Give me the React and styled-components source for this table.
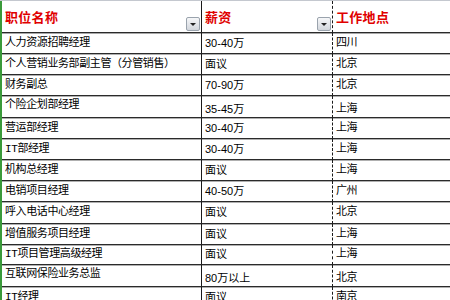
import React from 'react';
import styled, { createGlobalStyle } from 'styled-components';

const GlobalStyle = createGlobalStyle`
  html, body {
    margin: 0;
    padding: 0;
    background: #fff;
    overflow: hidden;
  }
  body {
    font-family: "Liberation Sans", "Noto Sans CJK SC", sans-serif;
  }
`;

const rows = [
  { name: '人力资源招聘经理', pay: '30-40万', city: '四川' },
  { name: '个人营销业务部副主管（分管销售）', pay: '面议', city: '北京' },
  { name: '财务副总', pay: '70-90万', city: '北京' },
  { name: '个险企划部经理', pay: '35-45万', city: '上海', tall: true },
  { name: '营运部经理', pay: '30-40万', city: '上海' },
  { name: 'IT部经理', pay: '30-40万', city: '上海' },
  { name: '机构总经理', pay: '面议', city: '上海' },
  { name: '电销项目经理', pay: '40-50万', city: '广州' },
  { name: '呼入电话中心经理', pay: '面议', city: '北京', h: 22 },
  { name: '增值服务项目经理', pay: '面议', city: '上海' },
  { name: 'IT项目管理高级经理', pay: '面议', city: '上海', h: 20 },
  { name: '互联网保险业务总监', pay: '80万以上', city: '北京', tall: true },
  { name: 'IT经理', pay: '面议', city: '南京', h: 22 },
];

const rule = col =>
  col === 0 ? '1px solid #1a1a1a' : col === 1 ? '1px dashed #1a1a1a' : 'none';

const Page = styled.div`
  width: 450px;
  height: 300px;
  overflow: hidden;
  display: flex;
  flex-direction: column;
`;

const TopStrip = styled.div`
  height: 2px;
  background: #e4e6ea;
  border-bottom: 1px solid #c4c8cf;
`;

const Sheet = styled.div`
  display: grid;
  grid-template-columns: 200px 131px 1fr;
  border-left: 2px solid #3a9a3a;
`;

const HeadCell = styled.div`
  height: 31px;
  display: flex;
  align-items: center;
  padding-left: 3px;
  padding-right: 1px;
  border-bottom: 1px solid #2a2a2a;
  box-shadow: 0 1px 0 #a8a8a8;
  border-right: ${p => rule(p.$col)};
  color: #e00000;
  font-family: "Noto Sans CJK SC", sans-serif;
  font-weight: 700;
  font-size: 13px;
  letter-spacing: 0.3px;
`;

const HeadText = styled.span`
  flex: 1;
`;

const Filter = styled.span`
  align-self: flex-end;
  margin-bottom: 1px;
  width: 14px;
  height: 14px;
  box-sizing: border-box;
  border: 1px solid #9aa3ad;
  border-radius: 2px;
  background: linear-gradient(#f6f7f9, #d2d6dc);
  display: flex;
  align-items: center;
  justify-content: center;

  &::after {
    content: '';
    border-left: 3px solid transparent;
    border-right: 3px solid transparent;
    border-top: 3px solid #222;
    margin-top: 1px;
  }
`;

const pads = {
  center: '0 0 0 3px',
  'flex-start': '3px 0 0 3px',
  'flex-end': '0 0 1px 3px',
};

const Cell = styled.div`
  height: ${p => p.$h}px;
  box-sizing: border-box;
  display: flex;
  align-items: ${p => p.$align};
  padding: ${p => pads[p.$align]};
  border-bottom: 1px solid #2a2a2a;
  box-shadow: 0 1px 0 #b0b0b0;
  border-right: ${p => rule(p.$col)};
  color: #000;
  font-family: ${p =>
    p.$col === 1
      ? '"Liberation Sans", "Noto Sans CJK SC", sans-serif'
      : '"Liberation Mono", "Noto Sans CJK SC", monospace'};
  font-size: 11px;
  letter-spacing: ${p => (p.$col === 1 ? '0' : '-0.4px')};
  line-height: 13px;
  white-space: nowrap;
  overflow: hidden;
`;

export default function App() {
  return (
    <Page>
      <GlobalStyle />
      <TopStrip />
      <Sheet>
        <HeadCell $col={0}>
          <HeadText>职位名称</HeadText>
          <Filter />
        </HeadCell>
        <HeadCell $col={1}>
          <HeadText>薪资</HeadText>
          <Filter />
        </HeadCell>
        <HeadCell $col={2}>
          <HeadText>工作地点</HeadText>
        </HeadCell>
        {rows.map((r, i) => {
          const h = r.tall ? 22 : r.h || 21;
          return (
            <React.Fragment key={i}>
              <Cell $col={0} $h={h} $align={r.tall ? 'flex-start' : 'center'}>
                {r.name}
              </Cell>
              <Cell $col={1} $h={h} $align={r.tall ? 'flex-end' : 'center'}>
                {r.pay}
              </Cell>
              <Cell $col={2} $h={h} $align={r.tall ? 'flex-end' : 'center'}>
                {r.city}
              </Cell>
            </React.Fragment>
          );
        })}
      </Sheet>
    </Page>
  );
}
